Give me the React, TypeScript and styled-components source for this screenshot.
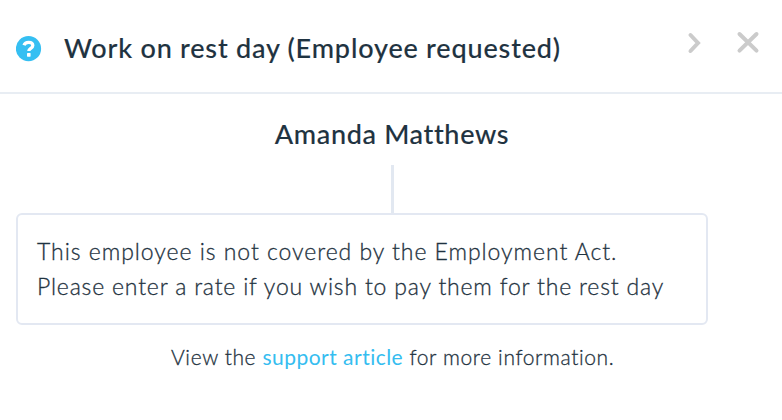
import React from "react";
import styled, { createGlobalStyle } from "styled-components";

const GlobalStyle = createGlobalStyle`
  * { box-sizing: border-box; }
  body { margin: 0; background: #fff; }
`;

const Modal = styled.main`
  width: 782px;
  height: 420px;
  overflow: hidden;
  background: #fff;
  color: #1f3341;
  font-family: Lato, "Open Sans", sans-serif;
`;

const Header = styled.header`
  display: flex;
  align-items: center;
  height: 94px;
  padding: 5px 23px 0 16px;
  border-bottom: 2px solid #e8edf3;
`;

const HelpIcon = styled.svg`
  flex: none;
  width: 26px;
  height: 26px;
  margin: 1px 22px 0 0;
`;

const Title = styled.h1`
  flex: 1;
  margin: -1px 0 0;
  font-size: 27px;
  font-weight: 500;
  line-height: 34px;
  letter-spacing: 0.85px;
  word-spacing: -0.3px;
  white-space: nowrap;
  -webkit-text-stroke: 0.12px currentColor;
`;

const Actions = styled.div`
  display: flex;
  gap: 36px;
  height: 22px;
  margin-top: -12px;
`;

const IconButton = styled.button<{ $width: number }>`
  display: block;
  width: ${({ $width }) => $width}px;
  height: 22px;
  padding: 0;
  border: 0;
  background: none;
  color: #cbcbcb;

  svg {
    display: block;
    width: 100%;
    height: 100%;
    overflow: visible;
  }
`;

const Body = styled.section`
  display: flex;
  flex-direction: column;
  padding: 23px 0 0 16px;
`;

const Name = styled.h2`
  margin: 0 14px 0 0;
  font-size: 27px;
  font-weight: 500;
  line-height: 34px;
  letter-spacing: 0.65px;
  text-align: center;
  -webkit-text-stroke: 0.12px currentColor;
`;

const Connector = styled.div`
  width: 3px;
  height: 48px;
  margin: 14px 0 0 375px;
  background: #e2e8f1;
`;

const Notice = styled.div`
  width: 692px;
  height: 112px;
  padding: 19px;
  border: 2px solid #e3e8f2;
  border-radius: 6px;
`;

const Line = styled.p<{ $spacing: number }>`
  margin: 0;
  font-size: 23px;
  font-weight: 300;
  line-height: 35px;
  letter-spacing: ${({ $spacing }) => $spacing}px;
  white-space: nowrap;
  -webkit-text-stroke: 0.3px currentColor;
`;

const Footnote = styled.p`
  margin: 17px 0 0 155px;
  font-size: 21px;
  font-weight: 300;
  line-height: 30px;
  letter-spacing: 0.6px;
  white-space: nowrap;
  -webkit-text-stroke: 0.3px currentColor;
`;

const Link = styled.a`
  color: #35bdf0;
  font-weight: 400;
  letter-spacing: 0.48px;
  text-decoration: none;
  -webkit-text-stroke: 0;
`;

export default function App() {
  return (
    <>
      <GlobalStyle />
      <Modal>
        <Header>
          <HelpIcon viewBox="0 0 26 26" aria-hidden="true">
            <circle cx="12.5" cy="12.7" r="12.6" fill="#35bff2" />
            <path
              d="M8 9.2C8.7 7.2 10.3 6.3 12.6 6.3c2.6 0 4.2 1.2 4.2 3.1 0 3-4 2.8-4 5.6"
              fill="none"
              stroke="#fff"
              strokeWidth="3.3"
            />
            <rect x="11" y="16.9" width="3.6" height="3.8" rx=".6" fill="#fff" />
          </HelpIcon>
          <Title>Work on rest day (Employee requested)</Title>
          <Actions>
            <IconButton $width={14} aria-label="Next">
              <svg viewBox="0 0 14 22" fill="none" stroke="currentColor" strokeWidth="4" strokeLinecap="round">
                <path d="M3.5 3L11 11L3.5 19" />
              </svg>
            </IconButton>
            <IconButton $width={22} aria-label="Close">
              <svg viewBox="0 0 22 22" fill="none" stroke="currentColor" strokeWidth="4" strokeLinecap="round">
                <path d="M2.5 2L19.5 18.6M19.5 2L2.5 18.6" />
              </svg>
            </IconButton>
          </Actions>
        </Header>
        <Body>
          <Name>Amanda Matthews</Name>
          <Connector />
          <Notice>
            <Line $spacing={0.96}>This employee is not covered by the Employment Act.</Line>
            <Line $spacing={0.81}>Please enter a rate if you wish to pay them for the rest day</Line>
          </Notice>
          <Footnote>
            View the <Link>support article</Link> for more information.
          </Footnote>
        </Body>
      </Modal>
    </>
  );
}
